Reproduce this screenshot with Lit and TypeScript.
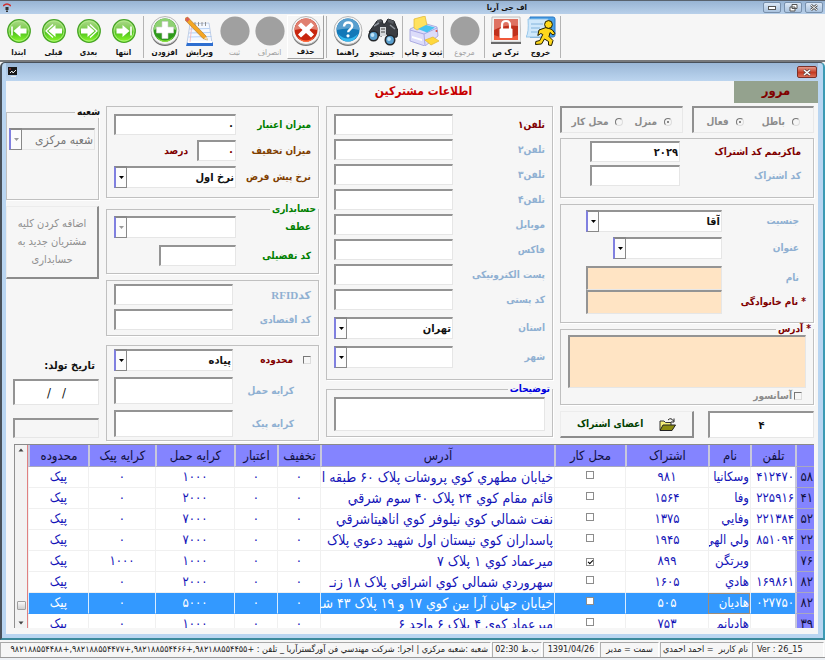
import { LitElement, html, svg, css, nothing, TemplateResult } from "lit";
import { customElement, property } from "lit/decorators.js";
import { classMap } from "lit/directives/class-map.js";

type Tool = { label: string; icon: string; off?: boolean; raised?: boolean };

const toolGroups: Tool[][] = [
  [
    { label: "ابتدا", icon: "first" },
    { label: "قبلی", icon: "prev" },
    { label: "بعدی", icon: "next" },
    { label: "انتها", icon: "last" },
  ],
  [
    { label: "افزودن", icon: "add" },
    { label: "ویرایش", icon: "edit" },
    { label: "ثبت", icon: "disc", off: true },
    { label: "انصراف", icon: "disc", off: true },
    { label: "حذف", icon: "remove", raised: true },
  ],
  [
    { label: "راهنما", icon: "help" },
    { label: "جستجو", icon: "search" },
  ],
  [{ label: "ثبت و چاپ", icon: "print" }],
  [{ label: "مرجوع", icon: "disc", off: true }],
  [
    { label: "ترک ص", icon: "lock" },
    { label: "خروج", icon: "exit" },
  ],
];

const navShapes: Record<string, TemplateResult> = {
  first: svg`<path d="M5 7.5v9" stroke="#fff" stroke-width="1.600"/><path d="M6.500 12l7-6v3.500h6v5h-6v3.500z"/>`,
  prev: svg`<path d="M11 5.500L4 12l7 6.500" fill="none" stroke="#fff" stroke-width="1.300"/><path d="M6.500 12l7-6v3.500h6.500v5h-6.500v3.500z"/>`,
  next: svg`<path d="M13 5.500l7 6.500-7 6.500" fill="none" stroke="#fff" stroke-width="1.300"/><path d="M17.500 12l-7-6v3.500H4v5h6.500v3.500z"/>`,
  last: svg`<path d="M19 7.500v9" stroke="#fff" stroke-width="1.600"/><path d="M17.500 12l-7-6v3.500h-6v5h6v3.500z"/>`,
};

function toolIcon(name: string): TemplateResult {
  if (name in navShapes) {
    return html`<svg viewBox="0 0 24 24" width="24" height="24" aria-hidden="true">
      <defs><linearGradient id="g" x1="0" y1="0" x2="0" y2="1">
        <stop offset="0" stop-color="#b0d890"/><stop offset=".45" stop-color="#78cc48"/><stop offset=".55" stop-color="#50c020"/><stop offset="1" stop-color="#8cff2a"/>
      </linearGradient></defs>
      <circle cx="12" cy="12" r="11.300" fill="url(#g)" stroke="#48a428" stroke-width="1.200"/>
      <circle cx="12" cy="12" r="10" fill="none" stroke="#b4f088" stroke-width=".8"/>
      <g fill="#fff" stroke-linejoin="round">${navShapes[name]}</g>
    </svg>`;
  }
  const art: Record<string, TemplateResult> = {
    disc: svg`<circle cx="15" cy="15" r="14.600" fill="#a0a0a0"/>`,
    add: svg`<circle cx="15" cy="16" r="14" fill="#6f6f6f"/><circle cx="15" cy="14.500" r="14" fill="#f4f4f4" stroke="#a8a8a8" stroke-width=".8"/>
      <circle cx="15" cy="14" r="11.500" fill="#2f9a1c"/><path d="M3.600 14a11.400 11.400 0 0 1 22.800 0q-11-4-22.800 0z" fill="#8fd173"/><path d="M6 20q9 9 18 0-4 6-9 6t-9-6z" fill="#86e03c"/>
      <path d="M12 5.500h6v5.500h5.500v6H18v5.500h-6V17H6.500v-6H12z" fill="#fff" stroke="#cfcfcf" stroke-width=".6"/>`,
    remove: svg`<circle cx="15" cy="16" r="14" fill="#777"/><circle cx="15" cy="14.500" r="14" fill="#f4f4f4" stroke="#a8a8a8" stroke-width=".8"/>
      <circle cx="15" cy="14" r="11.500" fill="#c8260e"/><path d="M3.600 14a11.400 11.400 0 0 1 22.800 0q-11-3-22.800 0z" fill="#e08070"/><path d="M6 20q9 9 18 0-4 6-9 6t-9-6z" fill="#ff6a3c"/>
      <path d="M10 6.500l5 4.500 5-4.500 3 3-4.500 4.500 4.500 4.500-3 3-5-4.500-5 4.500-3-3 4.500-4.500L7 9.500z" fill="#fff"/>`,
    help: svg`<circle cx="15" cy="16" r="14" fill="#777"/><circle cx="15" cy="14.500" r="14" fill="#f4f4f4" stroke="#a8a8a8" stroke-width=".8"/>
      <circle cx="15" cy="14" r="11.500" fill="#1278b8"/><path d="M3.600 14a11.400 11.400 0 0 1 22.800 0q-11-3-22.800 0z" fill="#5a9fce"/><path d="M5 18q10 9 20 0-3 7.500-10 7.500T5 18z" fill="#35b9ef"/>
      <path d="M11 10.500q.4-4 4.200-4 4 0 4 3.500 0 2-2.200 3.400-1.800 1.200-1.800 2.800" fill="none" stroke="#fff" stroke-width="2.400"/><circle cx="15" cy="19.800" r="1.600" fill="#fff"/>`,
    edit: svg`<path d="M5 8l19-1 3 20H2z" fill="#f4f8ff" stroke="#b4c4e0" stroke-width=".8"/><path d="M2 26.500h26V30H1z" fill="#2f6fd0"/><path d="M3 25h24v2H2.500z" fill="#fff"/>
      <path d="M4.500 13l20-.5M4 17l21.500-.5M3.500 21l23-.5" stroke="#a4c6f2" stroke-width=".8"/><path d="M7 8L5 26" stroke="#f4b4b8" stroke-width=".8"/>
      <path d="M10 6v4M13.500 6v4M17 6v4M20.500 6v4" stroke="#888" stroke-width=".9"/>
      <path d="M-1 3l3.500-2L21 20l1.500 4-4.500-1.500z" fill="#f5a623" stroke="#9a6210" stroke-width=".5"/><path d="M0 3.500L2.500 1l2.500 2.300L2.300 6z" fill="#d86058"/><path d="M19 22.500l2.500-2 1.500 4z" fill="#f4dcb0"/>`,
    search: svg`<path d="M9 5l5-1 1 4h2l3-5 6 2 4 10-1 6-8 1-3-5h-3l-1 3-9-1-4-3z" fill="#3a3d42" stroke="#1d2024"/><path d="M9 4l4-1 1 3-5 1zM20 3l6 2-1 3-5-2z" fill="#55595f"/>
      <path d="M6 10l5-3M22 9l5 4" stroke="#8e949c" stroke-width="1.500"/><path d="M12 11h6v9h-6z" fill="#d5d8da"/><path d="M13 13h4M13 16h4" stroke="#444"/>
      <circle cx="5.500" cy="20" r="4.700" fill="#5aa0cf" stroke="#24272b" stroke-width="1.600"/><circle cx="22" cy="24" r="4.700" fill="#5aa0cf" stroke="#24272b" stroke-width="1.600"/><circle cx="4.500" cy="19" r="1.900" fill="#bfe4f8"/><circle cx="21" cy="23" r="1.900" fill="#bfe4f8"/>`,
    print: svg`<path d="M1 13l13-6 14 4 1 9-13 10L1 25z" fill="#dcdcfa" stroke="#9c9cdc" stroke-width=".8"/><path d="M5 3l11-3 2 9-10 5-3-2z" fill="#ffe25e" stroke="#e0b430" stroke-width=".7"/>
      <path d="M1 14l14 4 13-6" fill="none" stroke="#a8a8e4"/><path d="M15 18l1 11" stroke="#a8a8e4"/><path d="M9 13l8-4 9 2.500-8 5z" fill="#46c4f0"/><path d="M3 20l10 3v2L3 22z" fill="#fff"/>
      <path d="M16 24l8-3 6 4-8 4z" fill="#ffd83c" stroke="#e0b430" stroke-width=".7"/><circle cx="27.500" cy="15" r="1" fill="#e05040"/>`,
    lock: svg`<path d="M1 1h28l1 25H0z" fill="#f2f2f2" stroke="#aaa" stroke-width=".7"/><path d="M0 26h30v2H0z" fill="#6a6a6a"/><path d="M3 3h24v21H3z" fill="#c0301c"/><path d="M3 3h24v7Q14 8 3 14z" fill="#df7262"/><path d="M3 24v-5q12 5 24 0v5z" fill="#f0583a"/>
      <path d="M11 13V9q0-4 4-4t4 4v4" fill="none" stroke="#fff" stroke-width="2.200"/><rect x="8.500" y="12.500" width="13" height="9.500" rx="1" fill="#fff"/>`,
    exit: svg`<path d="M4 1h23q2 0 2 2v16q0 2-2 2H4z" fill="#4aa0e6" stroke="#2a78c4"/><path d="M2 3h20v18H0q3-4 2-18z" fill="#cfe8fb" stroke="#86bce4" stroke-width=".8"/><path d="M5 8h12M5 12h9M5 16h8" stroke="#82b4dc"/>
      <g stroke="#1d1a00" stroke-linejoin="round"><path d="M13 14l7-2.500 6 2 3 4-2 1.500-3-2.500-1 4 4 4-1.500 5-3-.5v-3.500l-4-2.500-3 5-6 .5.300-3 4-1 3-6-2-1-3 2z" fill="#ffd91c"/><circle cx="22.500" cy="8.500" r="3.900" fill="#ffd91c"/></g>`,
  };
  return html`<svg viewBox="0 0 30 30" width="30" height="30" aria-hidden="true">${art[name]}</svg>`;
}

@customElement("tool-bar")
class ToolBar extends LitElement {
  static styles = css`
    :host { display: block; direction: ltr; background: #f6f6f6; border-bottom: 2px solid #77797c; }
    .bar { display: flex; height: 46px; padding: 1px; box-sizing: border-box; }
    .sep { width: 1px; margin: 1px 3px 1px 2px; background: #b4b4b4; }
    button { width: 35px; padding: 0; border: 0; background: none; display: flex; flex-direction: column; align-items: center; justify-content: space-between; direction: rtl; overflow: visible; }
    .raised { width: 37px; border: 1px solid; border-color: #fff #a0a0a0 #a0a0a0 #fff; }
    .pic { height: 32px; display: flex; align-items: center; }
    .text { font: bold 8px/12px "DejaVu Sans Condensed", "DejaVu Sans", sans-serif; color: #111; white-space: nowrap; }
    button:disabled .text { color: #a0a0a0; font-weight: normal; }
  `;
  render() {
    return html`<nav class="bar">
      ${toolGroups.map(
        (group) => html`${group.map(
          (t) => html`<button ?disabled=${t.off} class=${classMap({ raised: !!t.raised })}>
            <span class="pic">${toolIcon(t.icon)}</span><span class="text">${t.label}</span>
          </button>`
        )}<span class="sep"></span>`
      )}
    </nav>`;
  }
}

type Row = { head: string; phone: string; name: string; code: string; work?: boolean; address: string; fee: string; courier: string; current?: boolean };

const rows: Row[] = [
  { head: "۵۸", phone: "۴۱۲۴۷۰", name: "وسکانیا", code: "۹۸۱", address: "خیابان مطهري کوي پروشات پلاک ۶۰ طبقه ا", fee: "۱۰۰۰", courier: "۰" },
  { head: "۴۱", phone: "۲۲۵۹۱۶", name: "وفا", code: "۱۵۶۴", address: "قائم مقام کوي ۲۴ پلاک ۴۰ سوم شرقي", fee: "۲۰۰۰", courier: "۰" },
  { head: "۵۲", phone: "۲۲۱۳۸۴", name: "وفایي", code: "۱۳۷۵", address: "نفت شمالي کوي نیلوفر کوي اناهیتاشرقي", fee: "۷۰۰۰", courier: "۰" },
  { head: "۲۲", phone: "۸۵۱۰۹۴", name: "ولي الهي", code: "۱۹۴۵", address: "پاسداران کوي نیستان اول شهید دعوي پلاک", fee: "۷۰۰۰", courier: "۰" },
  { head: "۷۶", phone: "", name: "ویرتگن", code: "۸۹۹", work: true, address: "میرعماد کوي ۱ پلاک ۷", fee: "۱۰۰۰", courier: "۱۰۰۰" },
  { head: "۸۲", phone: "۱۶۹۸۶۱", name: "هادي", code: "۱۶۰۵", address: "سهروردي شمالي کوي اشراقي پلاک ۱۸ زنـ", fee: "۲۰۰۰", courier: "۰" },
  { head: "۸۲", phone: "۰۲۷۷۵۰", name: "هادیان", code: "۵۰۵", address: "خیابان جهان آرا بین کوي ۱۷ و ۱۹ پلاک ۴۳ شـ", fee: "۵۰۰۰", courier: "۰", current: true },
  { head: "۳۹", phone: "", name: "هادیانم", code: "۷۵۳", address: "میرعماد کوي ۴ پلاک ۶ واحد ۶", fee: "۱۰۰۰", courier: "۰" },
];

@customElement("member-table")
class MemberTable extends LitElement {
  static styles = css`
    :host { display: flex; overflow: hidden; border-top: 1px solid #8a8a8a; direction: rtl; font: 13px/20px "DejaVu Sans Condensed", "DejaVu Sans", sans-serif; }
    .view { flex: 1; min-width: 0; overflow: hidden; background: #fff; }
    table { width: 100%; table-layout: fixed; border-collapse: separate; border-spacing: 0; }
    th, td { box-sizing: border-box; padding: 0 1px; white-space: nowrap; overflow: hidden; text-align: center; font-weight: normal; }
    th { background: #8484ff; color: #101040; border-left: 2px solid #c8c8dc; border-bottom: 1px solid #a8a8c0; }
    thead th { height: 22px; line-height: 21px; }
    tbody th { text-align: right; padding: 0 1px 0 0; }
    td { height: 21px; color: #1414b8; border-left: 1px solid #f0f0f0; border-bottom: 1px solid #f0f0f0; }
    .start { text-align: right; }
    .address { font-size: 14px; }
    .current td { background: #3399ff; color: #fff; border-color: #d8ecff #d8ecff #3399ff #d8ecff; }
    .current .cell { outline: 1px solid #9a8c7c; outline-offset: -1px; }
    .c-head { width: 19px; } .c-phone { width: 45px; } .c-name { width: 42px; } .c-code { width: 83px; }
    .c-work { width: 71px; } .c-num { width: 43px; } .c-fee { width: 79px; } .c-pick { width: 67px; } .c-zone { width: 60px; }
    input { appearance: none; width: 8px; height: 8px; margin: 0; border: 1px solid #8c8c8c; background: #fff; display: inline-grid; place-items: center; vertical-align: 2px; }
    input:checked::before { content: ""; width: 4px; height: 2px; border: solid #000; border-width: 0 0 1px 1px; transform: rotate(-45deg); }
    .scroll { width: 14px; box-sizing: border-box; border-right: 1px solid #e08080; border-left: 1px solid #909090; background: #f2f2f2; display: flex; flex-direction: column; align-items: center; }
    .space { flex: 1; }
    .thumb { width: 9px; height: 9px; box-sizing: border-box; border: 1px solid #a0a0a0; border-radius: 1px; background: linear-gradient(#f8f8f8, #d0d0d0); margin-bottom: 8px; }
    .tick { width: 10px; height: 10px; }
  `;
  render() {
    return html`
      <div class="view"><table>
        <colgroup>
          <col class="c-head" /><col class="c-phone" /><col class="c-name" /><col class="c-code" /><col class="c-work" /><col />
          <col class="c-num" /><col class="c-num" /><col class="c-fee" /><col class="c-pick" /><col class="c-zone" />
        </colgroup>
        <thead><tr>
          <th></th>
          ${["تلفن", "نام", "اشتراک", "محل کار", "آدرس", "تخفیف", "اعتبار", "کرایه حمل", "کرایه پیک", "محدوده"].map((h) => html`<th scope="col">${h}</th>`)}
        </tr></thead>
        <tbody>
          ${rows.map(
            (r) => html`<tr class=${classMap({ current: !!r.current })}>
              <th scope="row">${r.head}</th><td class="start">${r.phone}</td><td class="start cell">${r.name}</td><td>${r.code}</td>
              <td><input type="checkbox" aria-label="محل کار" .checked=${!!r.work} /></td>
              <td class="start address">${r.address}</td><td>۰</td><td>۰</td><td>${r.fee}</td><td>${r.courier}</td><td>پیک</td>
            </tr>`
          )}
        </tbody>
      </table></div>
      <div class="scroll" aria-hidden="true">
        <svg class="tick" viewBox="0 0 10 10"><path d="M5 3.500L7.500 6.500h-5z" fill="#444" /></svg>
        <span class="space"></span><span class="thumb"></span>
        <svg class="tick" viewBox="0 0 10 10"><path d="M5 6.500L2.500 3.500h5z" fill="#444" /></svg>
      </div>`;
  }
}

@customElement("app-root")
class AppRoot extends LitElement {
  @property() mode = "مرور";

  static styles = css`
    :host { display: flex; flex-direction: column; height: 100vh; min-height: 640px; direction: rtl; background: #f6f6f6; font: bold 10px/14px "DejaVu Sans Condensed", "DejaVu Sans", sans-serif; color: #111; overflow: hidden; }
    * { box-sizing: border-box; }
    .title { display: grid; grid-template-columns: 490fr auto 300fr; direction: ltr; align-items: center; height: 14px; border-top: 1px solid #59636f; background: linear-gradient(#98b4d4, #b8d0ea); font-size: 8px; line-height: 12px; }
    .caption { direction: rtl; }
    .logo { margin-left: 3px; display: block; }
    .winbtns { display: flex; gap: 3px; justify-content: flex-end; padding-right: 2px; }
    .winbtn { width: 18px; height: 11px; padding: 0; border: 1px solid #7890ac; border-radius: 2px; background: linear-gradient(#dce8f6, #a9c2de); display: grid; place-items: center; }
    .closer { width: 20px; height: 12px; border-color: #7c3028; background: linear-gradient(#e49a8c, #c43c24 55%, #dc7058); }
    .window { flex: 1; min-height: 0; display: flex; flex-direction: column; border: solid; border-width: 1px 2px 2px 2px; border-color: #49515a #3c9ab4 #3c8a9c #49515a; border-radius: 5px 5px 0 0; background: #b9d5f1; padding: 0 5px 4px 4px; }
    .sub { display: flex; justify-content: space-between; align-items: center; direction: ltr; height: 18px; padding: 0 1px 0 2px; background: linear-gradient(#9ab7d7, #bcd5ef); }
    .content { flex: 1; min-height: 0; display: flex; flex-direction: column; background: #f6f6f6; padding-bottom: 6px; }
    .head { display: grid; grid-template-columns: 369fr auto 346fr; direction: ltr; }
    .head h1 { grid-column: 2; margin: 0; font-size: 12px; line-height: 20px; color: #c80000; direction: rtl; }
    .mode { justify-self: end; width: 84px; height: 22px; background: #94a28e; color: #800000; text-align: center; font-size: 13px; line-height: 20px; }
    .form { display: grid; grid-template-columns: 254fr 227fr 213fr 93fr; gap: 7px; padding: 3px 4px 0 0; }
    .col { display: flex; flex-direction: column; }
    .box { border: 1px solid #c0c0c0; box-shadow: 1px 1px #fff; margin: 0; min-width: 0; padding: 7px; }
    legend { padding: 0 2px; line-height: 12px; margin-right: -7px; }
    .row { display: flex; align-items: center; }
    .row + .row { margin-top: 4px; }
    .row.gap { margin-top: 7px; }
    .name { flex: none; white-space: nowrap; color: #8fb0d2; }
    .green { color: #008000; } .brown { color: #804000; } .maroon { color: #800000; } .black { color: #111; } .blue { color: #0000e0; } .gray { color: #8c8c8c; }
    .field { display: block; flex: 1; width: 100%; min-width: 0; height: 21px; margin: 0; padding: 0 1px; border: solid; border-width: 2px 1px 1px 2px; border-color: #949494 #e6e6e6 #e6e6e6 #949494; border-radius: 0; background: #fff; font: bold 11px/16px "DejaVu Sans Condensed", "DejaVu Sans", sans-serif; color: #111; direction: rtl; resize: none; appearance: none; }
    .combo { flex: 1; display: grid; min-width: 0; }
    .combo .field, .combo .arrow { grid-area: 1 / 1; height: 22px; }
    .arrow { justify-self: end; width: 13px; border: 1px solid #888; border-left: 2px solid #8080e0; border-top-width: 2px; background: #fcfcfc; display: grid; place-items: center; pointer-events: none; }
    .field:disabled { color: #777; opacity: 1; }
    .field.warm { background: #ffe4c4; }
    .tall { height: 27px; }
    .radios { display: grid; grid-template-columns: 123fr 123fr; gap: 9px; }
    .radio-box { display: flex; justify-content: space-around; align-items: center; height: 27px; border: solid; border-width: 2px 1px 1px 2px; border-color: #909090 #e8e8e8 #e8e8e8 #909090; margin: 0; padding: 4px 4px 0; min-width: 0; color: #8c8c8c; }
    .radio-box label { display: flex; align-items: center; gap: 7px; white-space: nowrap; }
    .radio-box input { appearance: none; width: 8px; height: 8px; margin: 0; border: 1px solid; border-color: #777 #ddd #ddd #777; border-radius: 50%; display: grid; place-items: center; }
    .radio-box input:checked::before { content: ""; width: 2px; height: 2px; background: #666; border-radius: 50%; }
    .tickbox { appearance: none; width: 8px; height: 8px; margin: 0; border: 1px solid; border-color: #777 #ddd #ddd #777; }
    .tick-label { display: flex; align-items: center; gap: 2px; }
    .w72 { width: 75px; } .w78 { width: 78px; } .w92 { width: 92px; } .w126 { width: 126px; padding-right: 5px; } .w84 { width: 84px; padding-right: 7px; }
    .star { padding-right: 0; }
    .in26 { padding-left: 18px; } .in30 { padding-left: 22px; }
    .indent { padding-right: 17px; }
    .push { border: solid; border-width: 1px 2px 2px 1px; border-color: #ececec #8c8c8c #8c8c8c #ececec; background: #f6f6f6; font: bold 10px/14px "DejaVu Sans Condensed", "DejaVu Sans", sans-serif; padding: 0; }
    .wide { height: 27px; width: 134px; display: flex; align-items: center; justify-content: space-evenly; color: #004000; }
    .accounts { height: 73px; margin-top: 6px; font-weight: normal; font-size: 11px; line-height: 18px; color: #909090; padding: 0 4px; }
    .end { display: flex; justify-content: space-between; gap: 14px; margin-top: 6px; }
    .end .field { text-align: center; height: 27px; }
    .light .field { font-weight: normal; font-size: 12px; }

    .codes { margin-top: 5px; padding: 2px 7px 9px; height: 60px; }
    .codes .row + .row { margin-top: 3px; }
    .person { margin-top: 6px; padding: 5px 7px 8px; }
    .person .prefix { padding-left: 45px; margin-top: 5px; }
    .person .warm { height: 24px; }
    .person .gap + .row { margin-top: 0; }
    .address { padding: 0 7px 1px; }
    .area { height: 53px; }
    .address .tick-label { padding: 1px 4px 0; }
    .phones { height: 274px; }
    .notes { margin-top: 3px; padding: 2px 7px 5px; }
    .note { height: 34px; }
    .credit { height: 92px; }
    .credit .row + .row { margin-top: 5px; }
    .row .tiny { flex: none; width: 39px; color: #800000; }
    .percent { margin-right: 9px; }
    .ledger { margin-top: 5px; padding: 1px 7px 7px; }
    .ledger .detail { padding-left: 45px; margin-top: 7px; }
    .cards { margin-top: 6px; padding: 3px 7px 5px; }
    .serif { font-family: "Liberation Serif", "DejaVu Sans", serif; font-size: 11px; }
    .fees { margin-top: 9px; padding: 3px 7px; }
    .zone { gap: 10px; }
    .fees .row.gap { margin-top: 6px; }
    .branch { height: 94px; padding: 10px 3px 0 2px; }
    .branch .field { background: #f6f6f6; }
    .birth { display: flex; flex-direction: column; padding-top: 80px; margin-left: 7px; }
    .birth label { font-size: 11px; padding-right: 4px; }
    .birth .date { flex: none; height: 26px; margin-top: 6px; font-weight: normal; font-size: 13px; text-align: center; white-space: pre; }
    .birth .blank { flex: none; height: 20px; margin-top: 13px; background: #f6f6f6; }

    member-table { flex: 1; min-height: 0; margin: 3px 4px 0 8px; }
    .status { display: flex; direction: ltr; height: 16px; margin-top: 2px; border-bottom: 1px solid #9a9a9a; font: 9px/13px "DejaVu Sans Condensed", "DejaVu Sans", sans-serif; color: #222; }
    .status span { border: solid; border-width: 1px 1px 0 1px; border-color: #a8a8a8 #fff #fff #b0b0b0; margin-right: 1px; white-space: nowrap; overflow: hidden; text-align: center; direction: rtl; padding: 0 2px; }
    .status .long { flex: 1; min-width: 0; text-align: right; }
    .s44 { width: 50px; } .s57 { width: 56px; } .s61 { width: 59px; } .s90 { width: 91px; } .s60 { width: 72px; }
    .status .s60 { direction: ltr; text-align: left; padding-left: 4px; }
    .foot { height: 2px; background: #eef1f5; }
  `;

  private text(id: string, label: string, opts: { tone?: string; width?: string; value?: string; extra?: string; field?: string } = {}) {
    return html`<div class="row ${opts.extra ?? ""}">
      <label class="name ${opts.width ?? "w92"} ${opts.tone ?? ""}" for=${id}>${label}</label>
      <input class="field ${opts.field ?? ""}" id=${id} type="text" .value=${opts.value ?? ""} />
    </div>`;
  }

  private combo(id: string, value: string, off = false, label?: string) {
    return html`<span class="combo">
      <select class="field" id=${id} ?disabled=${off} aria-label=${label ?? nothing}><option>${value}</option></select>
      <span class="arrow"><svg width="5" height="3" viewBox="0 0 5 3"><path d="M0 0h5L2.500 3z" fill=${off ? "#999" : "#000"} /></svg></span>
    </span>`;
  }

  private pick(id: string, label: string, value = "", opts: { tone?: string; width?: string; extra?: string; off?: boolean } = {}) {
    return html`<div class="row ${opts.extra ?? ""}">
      <label class="name ${opts.width ?? "w92"} ${opts.tone ?? ""}" for=${id}>${label}</label>${this.combo(id, value, opts.off)}
    </div>`;
  }

  render() {
    return html`
      <header class="title">
        <svg class="logo" width="8" height="10" viewBox="0 0 8 10"><path d="M0 3q4-4 8 0" fill="none" stroke="#d03030" stroke-width="1.500" /><path d="M2.500 4h3v3h-3zM3 7.500h2V9H3z" fill="#333" /></svg>
        <span class="caption">اف جی آریا</span>
        <span class="winbtns">
          <button class="winbtn" aria-label="کوچک"><svg width="8" height="4" viewBox="0 0 8 4"><rect x=".5" y=".5" width="7" height="3" fill="#fff" stroke="#555" /></svg></button>
          <button class="winbtn" aria-label="بازگردانی"><svg width="9" height="8" viewBox="0 0 9 8"><path d="M3 .5h5v4H3zM1 3h5v4H1z" fill="#fff" stroke="#555" /></svg></button>
          <button class="winbtn" aria-label="بستن"><svg width="8" height="7" viewBox="0 0 8 7"><path d="M1 1l6 5M7 1L1 6" stroke="#555" stroke-width="2.600" /><path d="M1 1l6 5M7 1L1 6" stroke="#fff" stroke-width="1" /></svg></button>
        </span>
      </header>
      <tool-bar></tool-bar>
      <main class="window">
        <div class="sub">
          <svg width="10" height="10" viewBox="0 0 10 10"><path d="M0 0h9v8H0z" fill="#181818" /><path d="M2 6l2-2 1 2 3-3M3 9.500h5" stroke="#e8e8e8" fill="none" /><path d="M1 2h2" stroke="#c44" /></svg>
          <button class="winbtn closer" aria-label="بستن پنجره"><svg width="8" height="7" viewBox="0 0 8 7"><path d="M1 1l6 5M7 1L1 6" stroke="#544" stroke-width="2.800" /><path d="M1 1l6 5M7 1L1 6" stroke="#fff" stroke-width="1.500" /></svg></button>
        </div>
        <div class="content">
          <div class="head"><h1>اطلاعات مشترکین</h1><div class="mode">${this.mode}</div></div>
          <form class="form">
            <div class="col">
              <div class="radios">
                <div class="radio-box" role="radiogroup" aria-label="وضعیت">
                  <label><input type="radio" name="state" disabled />باطل</label><label><input type="radio" name="state" checked disabled />فعال</label>
                </div>
                <div class="radio-box" role="radiogroup" aria-label="محل">
                  <label><input type="radio" name="place" checked disabled />منزل</label><label><input type="radio" name="place" disabled />محل کار</label>
                </div>
              </div>
              <div class="box codes">
                ${this.text("max", "ماکزیمم کد اشتراک", { tone: "maroon", width: "w126", value: "۲۰۲۹", extra: "in30" })}
                ${this.text("code", "کد اشتراک", { width: "w126", extra: "in30" })}
              </div>
              <div class="box person">
                ${this.pick("sex", "جنسیت", "آقا", { width: "w84", extra: "in26" })}
                ${this.pick("prefix", "عنوان", "", { width: "w84", extra: "prefix" })}
                ${this.text("first", "نام", { width: "w84", extra: "in26 gap", field: "warm" })}
                ${this.text("family", "* نام خانوادگی", { width: "w84 star", tone: "maroon", extra: "in26", field: "warm" })}
              </div>
              <fieldset class="box address">
                <legend class="maroon"><label for="addr">* آدرس</label></legend>
                <textarea class="field warm area" id="addr"></textarea>
                <label class="tick-label gray"><input class="tickbox" type="checkbox" disabled />آسانسور</label>
              </fieldset>
              <div class="end">
                <input class="field" aria-label="تعداد" type="text" .value=${"۴"} />
                <button type="button" class="push wide">
                  <svg width="17" height="15" viewBox="0 0 17 15"><path d="M1 13V4h4l1.500 1.500H12V8" fill="#f4ee78" stroke="#333" /><path d="M1 13.500L4 8h12.500L13 13.500z" fill="#8c8c10" stroke="#222" /><path d="M9 3q3-3 5.500 1M15 1.500V5h-3" fill="none" stroke="#222" /></svg>
                  <span>اعضای اشتراک</span>
                </button>
              </div>
            </div>
            <div class="col">
              <div class="box phones">
                ${this.text("t1", "تلفن۱", { tone: "maroon" })} ${this.text("t2", "تلفن۲")} ${this.text("t3", "تلفن۳")} ${this.text("t4", "تلفن۴")}
                ${this.text("mob", "موبایل")} ${this.text("fax", "فاکس")} ${this.text("mail", "پست الکترونیکی")} ${this.text("zip", "کد پستی")}
                ${this.pick("prov", "استان", "تهران", { extra: "gap" })} ${this.pick("city", "شهر", "", { extra: "gap" })}
              </div>
              <fieldset class="box notes">
                <legend class="blue"><label for="notes">توضیحات</label></legend>
                <textarea class="field note" id="notes"></textarea>
              </fieldset>
            </div>
            <div class="col">
              <div class="box credit">
                ${this.text("credit", "میزان اعتبار", { tone: "green", width: "w72", value: "۰", field: "green" })}
                <div class="row">
                  <label class="name w72 brown" for="disc">میزان تخفیف</label>
                  <input class="field tiny" id="disc" type="text" .value=${"۰"} /><span class="percent maroon">درصد</span>
                </div>
                ${this.pick("rate", "نرخ پیش فرض", "نرخ اول", { tone: "brown", width: "w72" })}
              </div>
              <fieldset class="box ledger">
                <legend class="green">حسابداری</legend>
                ${this.pick("ref", "عطف", "", { tone: "green", width: "w72", off: true })}
                ${this.text("detail", "کد تفضیلی", { tone: "green", width: "w72", extra: "detail" })}
              </fieldset>
              <div class="box cards">
                ${this.text("rfid", "کدRFID", { width: "w78 serif" })} ${this.text("eco", "کد اقتصادی", { width: "w78" })}
              </div>
              <div class="box fees">
                <div class="row">
                  <label class="name w78 maroon tick-label zone"><input class="tickbox" type="checkbox" />محدوده</label>${this.combo("zone", "پیاده", false, "محدوده")}
                </div>
                ${this.text("fee", "کرایه حمل", { width: "w78 indent", extra: "gap", field: "tall" })}
                ${this.text("courier", "کرایه پیک", { width: "w78 indent", extra: "gap", field: "tall" })}
              </div>
            </div>
            <div class="col">
              <fieldset class="box branch light">
                <legend class="black">شعبه</legend>
                ${this.combo("branch", "شعبه مرکزی", true, "شعبه")}
              </fieldset>
              <button type="button" class="push accounts" disabled>اضافه کردن کلیه مشتریان جدید به حسابداری</button>
              <div class="birth">
                <label for="birth">تاریخ تولد:</label>
                <input class="field date" id="birth" type="text" .value=${"/   /"} />
                <input class="field blank" type="text" aria-label="تاریخ" disabled />
              </div>
            </div>
          </form>
          <member-table></member-table>
        </div>
      </main>
      <footer class="status">
        <span class="long">شعبه :شعبه مرکزي | اجرا: شرکت مهندسي فن آورگسترآریا _ تلفن : +۹۸۲۱۸۸۵۵۴۴۵۵,+۹۸۲۱۸۸۵۵۴۴۶۶,+۹۸۲۱۸۸۵۵۴۴۷۷,+۹۸۲۱۸۸۵۵۴۴۸۸</span>
        <span class="s44">ب.ظ 02:30</span><span class="s57">1391/04/26</span><span class="s61">سمت = مدیر</span>
        <span class="s90">نام کاربر &nbsp;= احمد احمدي</span><span class="s60">Ver : 26_15</span>
      </footer>
      <div class="foot"></div>`;
  }
}
